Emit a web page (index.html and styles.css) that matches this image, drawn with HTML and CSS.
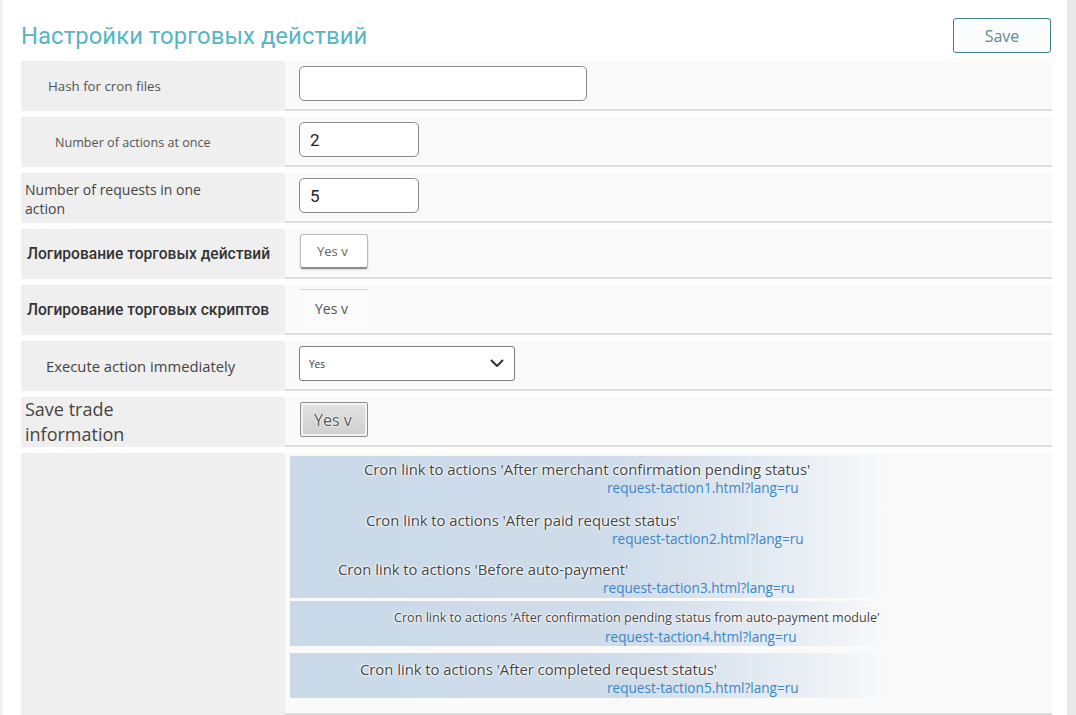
FILE: index.html
```html
<!DOCTYPE html>
<html lang="ru">
<head>
<meta charset="utf-8">
<title>Настройки торговых действий</title>
<link rel="stylesheet" href="styles.css">
</head>
<body>
<div class="page">
  <div class="header">
    <h1 class="title">Настройки торговых действий</h1>
    <button class="save">Save</button>
  </div>
  <div class="table">
    <div class="row">
      <div class="label l-hash">Hash for cron files</div>
      <div class="cell"><input class="inp inp-wide" type="text" value=""></div>
    </div>
    <div class="row">
      <div class="label l-num">Number of actions at once</div>
      <div class="cell"><input class="inp inp-num" type="text" value="2"></div>
    </div>
    <div class="row">
      <div class="label l-req"><span class="wrap-req">Number of requests in one action</span></div>
      <div class="cell"><input class="inp inp-num" type="text" value="5"></div>
    </div>
    <div class="row">
      <div class="label l-ru">Логирование торговых действий</div>
      <div class="cell"><span class="yes yes-box">Yes v</span></div>
    </div>
    <div class="row">
      <div class="label l-ru">Логирование торговых скриптов</div>
      <div class="cell"><span class="yes yes-flat">Yes v</span></div>
    </div>
    <div class="row">
      <div class="label l-exec">Execute action immediately</div>
      <div class="cell">
        <div class="select"><span>Yes</span>
          <svg class="chev" width="14" height="9" viewBox="0 0 14 9"><path d="M1.5 1.5 L7 7 L12.5 1.5" fill="none" stroke="#333" stroke-width="2" stroke-linecap="round" stroke-linejoin="round"/></svg>
        </div>
      </div>
    </div>
    <div class="row">
      <div class="label l-save"><span class="wrap-save">Save trade information</span></div>
      <div class="cell"><span class="yes yes-gray">Yes v</span></div>
    </div>
    <div class="row row-links">
      <div class="label"></div>
      <div class="cell cell-links">
        <div class="blk b1">
          <div class="bt">Cron link to actions 'After merchant confirmation pending status'</div>
          <a class="bl" href="#">request-taction1.html?lang=ru</a>
        </div>
        <div class="blk b2">
          <div class="bt">Cron link to actions 'After paid request status'</div>
          <a class="bl" href="#">request-taction2.html?lang=ru</a>
        </div>
        <div class="blk b3">
          <div class="bt">Cron link to actions 'Before auto-payment'</div>
          <a class="bl" href="#">request-taction3.html?lang=ru</a>
        </div>
        <div class="blk b4">
          <div class="bt">Cron link to actions 'After confirmation pending status from auto-payment module'</div>
          <a class="bl" href="#">request-taction4.html?lang=ru</a>
        </div>
        <div class="blk b5">
          <div class="bt">Cron link to actions 'After completed request status'</div>
          <a class="bl" href="#">request-taction5.html?lang=ru</a>
        </div>
      </div>
    </div>
  </div>
</div>
</body>
</html>
```
FILE: styles.css
```css
html, body {
  margin: 0;
  padding: 0;
}
body {
  background: #e9e9e9;
  font-family: "Open Sans", "Liberation Sans", sans-serif;
  color: #444;
  overflow: hidden;
}
.page {
  width: 1067px;
  min-height: 715px;
  background: #fff;
  border-left: 3px solid #f1f1f1;
  padding-left: 18px;
  box-sizing: border-box;
}
.header {
  display: flex;
  align-items: center;
  justify-content: space-between;
  width: 1031px;
  padding-top: 18px;
  height: 35px;
  margin-bottom: 8px;
  box-sizing: content-box;
}
.title {
  margin: 0;
  font-family: Roboto, "Liberation Sans", sans-serif;
  font-weight: 400;
  font-size: 23.8px;
  color: #56b5c5;
  letter-spacing: 0.1px;
}
.save {
  width: 98px;
  height: 35px;
  margin-right: 1px;
  background: #fbfdfd;
  border: 1px solid #3f7f89;
  border-radius: 3px;
  font-family: "Open Sans", "Liberation Sans", sans-serif;
  font-size: 16px;
  color: #5e8a93;
  padding: 0;
}
.table {
  width: 1031px;
  display: flex;
  flex-direction: column;
  gap: 6px;
}
.row {
  display: grid;
  grid-template-columns: 264px 767px;
  height: 50px;
}
.label {
  background: #efefef;
  display: flex;
  align-items: center;
  font-size: 13px;
  color: #555;
}
.cell {
  background: #fafafa;
  border-bottom: 2px solid #dcdcdc;
  display: flex;
  align-items: center;
  padding-left: 14px;
  padding-bottom: 3px;
}
.l-hash { padding-left: 27px; font-size: 13.3px; }
.l-num { padding-left: 34px; font-size: 12.6px; }
.l-req {
  padding-left: 4px;
  font-size: 14px;
  line-height: 19px;
  color: #444;
  padding-top: 2px;
}
.wrap-req { width: 190px; }
.l-ru {
  padding-left: 6px;
  font-family: Roboto, "Liberation Sans", sans-serif;
  font-weight: 500;
  font-size: 15.6px;
  color: #333;
}
.l-exec {
  padding-left: 25px;
  font-size: 14.8px;
  color: #444;
}
.l-save {
  padding-left: 4px;
  font-size: 18px;
  line-height: 25px;
  color: #444;
}
.wrap-save { width: 130px; }
.inp {
  height: 35px;
  box-sizing: border-box;
  border: 1px solid #8a8a8a;
  border-radius: 5px;
  background: #fff;
  font-family: Roboto, "Liberation Sans", sans-serif;
  font-size: 17px;
  color: #222;
  padding: 0 0 0 10px;
  outline: none;
}
.inp-wide { width: 288px; }
.inp-num { width: 120px; }
.yes {
  display: inline-flex;
  align-items: center;
  box-sizing: border-box;
  font-family: "Open Sans", "Liberation Sans", sans-serif;
}
.yes-box {
  width: 68px;
  height: 35px;
  margin-left: 1px;
  border: 1px solid #b9b9b9;
  border-bottom: 2px solid #8d8d8d;
  border-radius: 3px;
  background: #fff;
  box-shadow: 0 1px 2px rgba(0,0,0,0.15);
  font-size: 13px;
  color: #666;
  padding-left: 16px;
}
.yes-flat {
  width: 68px;
  height: 38px;
  margin-left: 1px;
  border-top: 1px solid #d7d7d7;
  background: #fbfbfb;
  font-size: 14px;
  color: #555;
  padding-left: 15px;
}
.yes-gray {
  width: 68px;
  height: 35px;
  margin-left: 1px;
  border: 1px solid #8f8f8f;
  border-radius: 2px;
  background: linear-gradient(#e2e2e2, #cfcfcf);
  box-shadow: inset 0 0 0 2px #f2f2f2;
  font-size: 16px;
  color: #555;
  padding-left: 13px;
  text-shadow: 0 0 2px #fff, 0 0 2px #fff, 0 0 1px #fff;
}
.select {
  width: 216px;
  height: 35px;
  box-sizing: border-box;
  border: 1px solid #7c7c7c;
  border-radius: 3px;
  background: #fff;
  display: flex;
  align-items: center;
  justify-content: space-between;
  padding: 0 10px 0 9px;
  font-size: 10px;
  color: #333;
}
.row-links {
  height: 262px;
}
.cell-links {
  flex-direction: column;
  align-items: stretch;
  justify-content: flex-start;
  padding: 3px 0 0 5px;
}
.blk {
  width: 600px;
  box-sizing: border-box;
  background: linear-gradient(to right, #c9d9e8 0%, #cfdcea 55%, #e8eef4 85%, #fafafa 100%);
  display: flex;
  flex-direction: column;
}
.bt {
  font-size: 14.8px;
  line-height: 20px;
  color: #444;
  white-space: nowrap;
  text-shadow: 0 0 2px #fff, 0 0 2px #fff, 0 0 3px #fff;
}
.bl {
  font-size: 13.6px;
  line-height: 18px;
  color: #3a86c8;
  text-decoration: none;
  white-space: nowrap;
}
.b1 { height: 50px; padding-top: 3px; }
.b1 .bt { padding-left: 74px; }
.b1 .bl { padding-left: 317px; }
.b2 { height: 50px; padding-top: 4px; }
.b2 .bt { padding-left: 76px; }
.b2 .bl { padding-left: 322px; }
.b3 { height: 42px; padding-top: 3px; margin-bottom: 3px; }
.b3 .bt { padding-left: 48px; }
.b3 .bl { padding-left: 313px; }
.b4 { height: 45px; padding-top: 7px; margin-bottom: 7px; }
.b4 .bt { padding-left: 104px; font-size: 12.6px; }
.b4 .bl { padding-left: 315px; }
.b5 { height: 45px; padding-top: 6px; }
.b5 .bt { padding-left: 70px; }
.b5 .bl { padding-left: 317px; }
```
